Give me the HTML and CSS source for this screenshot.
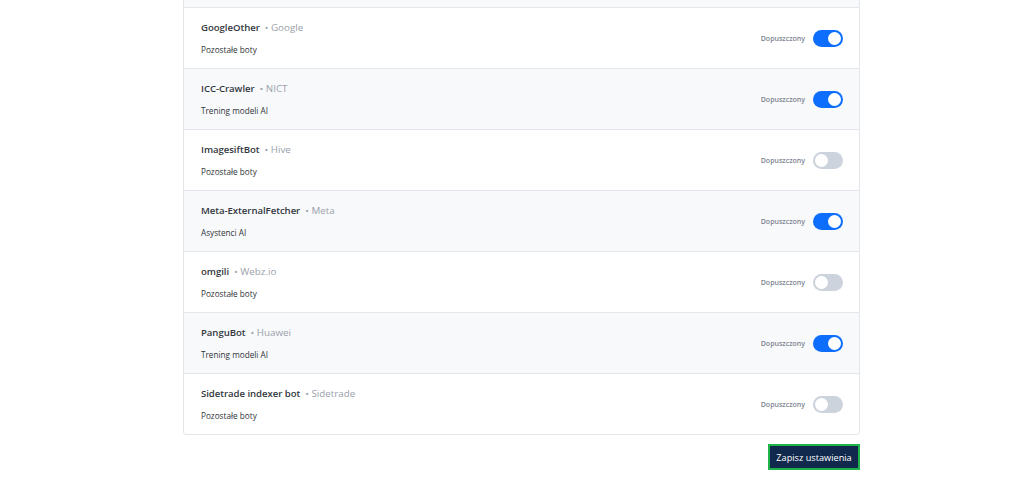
FILE: index.html
```html
<!DOCTYPE html>
<html lang="pl">
<head>
<meta charset="utf-8">
<title>Boty</title>
<link rel="stylesheet" href="styles.css">
</head>
<body>
<main class="page">
  <section class="bot-list">
    <div class="bot-row shaded">
      <div class="bot-info">
        <div class="bot-title"><span class="bot-name">Google-Extended</span><span class="bot-owner">• Google</span></div>
        <div class="bot-cat">Trening modeli AI</div>
      </div>
      <label class="bot-status"><span class="status-label">Dopuszczony</span><span class="switch on"></span></label>
    </div>
    <div class="bot-row">
      <div class="bot-info">
        <div class="bot-title"><span class="bot-name">GoogleOther</span><span class="bot-owner">• Google</span></div>
        <div class="bot-cat">Pozostałe boty</div>
      </div>
      <label class="bot-status"><span class="status-label">Dopuszczony</span><span class="switch on"></span></label>
    </div>
    <div class="bot-row shaded">
      <div class="bot-info">
        <div class="bot-title"><span class="bot-name">ICC-Crawler</span><span class="bot-owner">• NICT</span></div>
        <div class="bot-cat">Trening modeli AI</div>
      </div>
      <label class="bot-status"><span class="status-label">Dopuszczony</span><span class="switch on"></span></label>
    </div>
    <div class="bot-row">
      <div class="bot-info">
        <div class="bot-title"><span class="bot-name">ImagesiftBot</span><span class="bot-owner">• Hive</span></div>
        <div class="bot-cat">Pozostałe boty</div>
      </div>
      <label class="bot-status"><span class="status-label">Dopuszczony</span><span class="switch"></span></label>
    </div>
    <div class="bot-row shaded">
      <div class="bot-info">
        <div class="bot-title"><span class="bot-name">Meta-ExternalFetcher</span><span class="bot-owner">• Meta</span></div>
        <div class="bot-cat">Asystenci AI</div>
      </div>
      <label class="bot-status"><span class="status-label">Dopuszczony</span><span class="switch on"></span></label>
    </div>
    <div class="bot-row">
      <div class="bot-info">
        <div class="bot-title"><span class="bot-name">omgili</span><span class="bot-owner">• Webz.io</span></div>
        <div class="bot-cat">Pozostałe boty</div>
      </div>
      <label class="bot-status"><span class="status-label">Dopuszczony</span><span class="switch"></span></label>
    </div>
    <div class="bot-row shaded">
      <div class="bot-info">
        <div class="bot-title"><span class="bot-name">PanguBot</span><span class="bot-owner">• Huawei</span></div>
        <div class="bot-cat">Trening modeli AI</div>
      </div>
      <label class="bot-status"><span class="status-label">Dopuszczony</span><span class="switch on"></span></label>
    </div>
    <div class="bot-row">
      <div class="bot-info">
        <div class="bot-title"><span class="bot-name">Sidetrade indexer bot</span><span class="bot-owner">• Sidetrade</span></div>
        <div class="bot-cat">Pozostałe boty</div>
      </div>
      <label class="bot-status"><span class="status-label">Dopuszczony</span><span class="switch"></span></label>
    </div>
  </section>
  <div class="actions">
    <button class="save-btn" type="button">Zapisz ustawienia</button>
  </div>
</main>
</body>
</html>
```

FILE: styles.css
```css
html, body {
  margin: 0;
  padding: 0;
  background: #ffffff;
}

body {
  font-family: "Open Sans", "Noto Sans", "Liberation Sans", sans-serif;
  color: #2b2f36;
  overflow: hidden;
}

.page {
  width: 677px;
  margin: 0 auto 0 183px;
}

/* list is scrolled: the first row sits mostly above the fold */
.bot-list {
  margin-top: -55px;
  border: 1px solid #e3e7ec;
  border-radius: 3px;
  background: #ffffff;
}

.bot-row {
  height: 60px;
  display: flex;
  align-items: center;
  justify-content: space-between;
  padding: 0 16px 0 17px;
  border-top: 1px solid #e3e7ec;
}

.bot-row:first-child {
  border-top: none;
  height: 61px;
}

.bot-row.shaded {
  background: #f8f9fb;
}

.bot-info {
  display: flex;
  flex-direction: column;
  gap: 9px;
  margin-top: 1px;
}

.bot-title {
  display: flex;
  align-items: baseline;
  gap: 5px;
  line-height: 14px;
}

.bot-name {
  font-size: 9.6px;
  font-weight: 600;
  letter-spacing: -0.05px;
  color: #33373d;
}

.bot-owner {
  font-size: 9.8px;
  color: #9aa1ab;
}

.bot-cat {
  font-size: 8.2px;
  color: #2f3338;
  line-height: 12px;
}

.bot-status {
  display: flex;
  align-items: center;
  gap: 8px;
}

.status-label {
  font-size: 7px;
  font-weight: 600;
  color: #7d8591;
}

.switch {
  position: relative;
  width: 30px;
  height: 17px;
  border-radius: 9px;
  background: #ccd3dc;
}

.switch::after {
  content: "";
  position: absolute;
  top: 2px;
  left: 2px;
  width: 13px;
  height: 13px;
  border-radius: 50%;
  background: #ffffff;
}

.switch.on {
  background: #0d6efd;
}

.switch.on::after {
  left: 15px;
}

.actions {
  display: flex;
  justify-content: flex-end;
  margin-top: 9px;
}

.save-btn {
  width: 92px;
  height: 26px;
  padding: 0;
  border: 2px solid #1fb34a;
  border-radius: 0;
  background: #10294d;
  color: #ffffff;
  font-family: "Open Sans", "Noto Sans", "Liberation Sans", sans-serif;
  font-size: 9.2px;
}
```
